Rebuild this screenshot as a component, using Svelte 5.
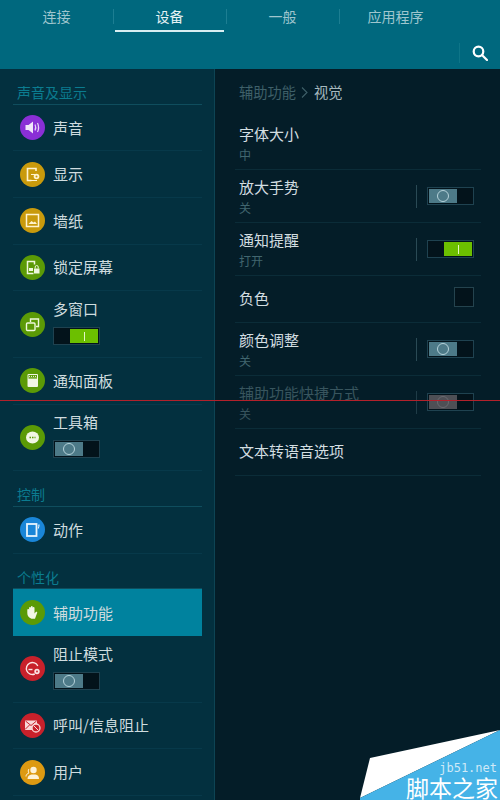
<script>
	const tabs = ['连接', '设备', '一般', '应用程序'];

	const menu = [
		{ section: '声音及显示', items: [
			{ id: 'sound', label: '声音', color: '#8a2fd6' },
			{ id: 'display', label: '显示', color: '#c99a0c' },
			{ id: 'wallpaper', label: '墙纸', color: '#c99a0c' },
			{ id: 'lock', label: '锁定屏幕', color: '#5b9a06' },
			{ id: 'multi', label: '多窗口', color: '#5b9a06', toggle: true },
			{ id: 'panel', label: '通知面板', color: '#5b9a06' },
			{ id: 'tools', label: '工具箱', color: '#5b9a06', toggle: false }
		] },
		{ section: '控制', items: [
			{ id: 'motion', label: '动作', color: '#1a86d8' }
		] },
		{ section: '个性化', items: [
			{ id: 'access', label: '辅助功能', color: '#5b9a06', active: true },
			{ id: 'block', label: '阻止模式', color: '#c8212b', toggle: false },
			{ id: 'callblock', label: '呼叫/信息阻止', color: '#c8212b' },
			{ id: 'user', label: '用户', color: '#dd9a12' }
		] }
	];

	const settings = [
		{ title: '字体大小', sub: '中' },
		{ title: '放大手势', sub: '关', toggle: false },
		{ title: '通知提醒', sub: '打开', toggle: true },
		{ title: '负色', check: true },
		{ title: '颜色调整', sub: '关', toggle: false },
		{ title: '辅助功能快捷方式', sub: '关', toggle: false, disabled: true },
		{ title: '文本转语音选项' }
	];
</script>

{#snippet sw(on)}
	<span class="switch" class:on>
		{#if on}
			<span class="off-part"></span>
			<span class="knob green"><i></i></span>
		{:else}
			<span class="knob grey"><b></b></span>
			<span class="off-part"></span>
		{/if}
	</span>
{/snippet}

{#snippet icon(id)}
	<svg viewBox="0 0 25 25" width="25" height="25" fill="none">
		{#if id === 'sound'}
			<path d="M5.500 10h3l4.500-3.500v12L8.500 15h-3z" fill="#f0e6fa" />
			<path d="M15 9.500q1.500 3 0 6M17.500 8q2.200 4.500 0 9" stroke="#e5d5f5" stroke-width="1.200" />
		{:else if id === 'display'}
			<path d="M16 9V6.500H7.500v12h4" stroke="#fff3cf" stroke-width="1.600" />
			<path d="M11 12.500h4M11 18.500h6" stroke="#fff3cf" stroke-width="1.200" />
			<circle cx="16.500" cy="14.500" r="2.800" fill="#fff3cf" />
			<circle cx="16.500" cy="14.500" r="1" fill="#c99a0c" />
		{:else if id === 'wallpaper'}
			<rect x="6.500" y="6.500" width="12" height="12" stroke="#fff3cf" stroke-width="1.500" />
			<path d="M8.500 16l3-3 2 1.500 1.500-1 2 2.500z" fill="#fff3cf" />
		{:else if id === 'lock'}
			<path d="M14.500 9.500v-3h-7v12h6" stroke="#eef8dc" stroke-width="1.500" />
			<rect x="9" y="13" width="4" height="3" fill="#eef8dc" />
			<rect x="14" y="13.500" width="5.500" height="5" fill="#eef8dc" />
			<path d="M15.200 13.500v-1.500a1.500 1.500 0 0 1 3 0v1.500" stroke="#eef8dc" />
		{:else if id === 'multi'}
			<rect x="6.500" y="11" width="8.500" height="7.500" rx="1" stroke="#eef8dc" stroke-width="1.400" />
			<path d="M10.500 10V7h8v7.500h-2.500" stroke="#eef8dc" stroke-width="1.400" />
		{:else if id === 'panel'}
			<rect x="7.500" y="6" width="10.500" height="13" rx="1" fill="#f2f6e4" />
			<rect x="8.500" y="7" width="8.500" height="2.800" fill="#5b9a06" />
			<path d="M9 8.400h7.500" stroke="#f2f6e4" stroke-dasharray="1 1" />
			<path d="M8.500 10.500h8.500" stroke="#5b9a06" stroke-width=".6" />
		{:else if id === 'tools'}
			<ellipse cx="12.500" cy="12.500" rx="6.500" ry="6" fill="#f2f6e4" />
			<path d="M9.500 12.500h6" stroke="#5b9a06" stroke-width="1.500" stroke-dasharray="1.500 1" />
		{:else if id === 'motion'}
			<rect x="7" y="7" width="9.500" height="12" stroke="#e8f4fd" stroke-width="1.800" />
			<path d="M18.800 7.500q.6 2-.6 4" stroke="#e8f4fd" stroke-width="1.200" />
		{:else if id === 'access'}
			<path d="M7.300 9.800a.9.900 0 0 1 1.800 0V8a.9.900 0 0 1 1.800 0V7a.9.900 0 0 1 1.800 0v1a.9.900 0 0 1 1.800 0v5.500l1.300-1.500c.8-.7 1.800.1 1.300.9L15 18.800h-3.500c-2.800-1-4.200-3-4.200-5.800z" fill="#f3f6e6" />
		{:else if id === 'block'}
			<path d="M17.800 10a6 6 0 1 0-3 8" stroke="#fbe4e4" stroke-width="1.400" />
			<path d="M8.500 13.500h4" stroke="#fbe4e4" stroke-width="1.400" />
			<circle cx="17" cy="15.500" r="2.700" fill="#fbe4e4" />
			<circle cx="17" cy="15.500" r=".9" fill="#c8212b" />
		{:else if id === 'callblock'}
			<rect x="5" y="7.500" width="12" height="9.500" fill="#f8d8d8" />
			<path d="M5.500 8l5.500 4.500L16.500 8M5 16.500l4.500-4.500" stroke="#c8212b" />
			<circle cx="16" cy="15" r="4" fill="#c8212b" stroke="#f8d8d8" stroke-width="1.300" />
			<path d="M13.500 12.500l5 5" stroke="#f8d8d8" />
		{:else if id === 'user'}
			<circle cx="13.500" cy="10" r="3.200" fill="#fdf2d8" />
			<path d="M7.500 19c0-3 2-4 4-4.500h4c2 .5 3.500 1.500 3.500 4.500z" fill="#fdf2d8" />
			<path d="M6 16.500c0-2 1.500-3 3-3.500-1-1-1-3 0-4" stroke="#fdf2d8" />
		{/if}
	</svg>
{/snippet}

<div class="screen">
	<header>
		<nav>
			{#each tabs as t, i}
				<div class="tab" class:current={i === 1}>{t}</div>
			{/each}
		</nav>
		<div class="tools">
			<span class="search">
				<svg viewBox="0 0 16 16" width="16" height="16" fill="none" stroke="#fff" stroke-width="2.200">
					<circle cx="6.500" cy="6.500" r="4.800" />
					<path d="M10 10l5 5" stroke-linecap="round" />
				</svg>
			</span>
		</div>
	</header>

	<div class="body">
		<aside>
			{#each menu as group}
				<div class="section"><span>{group.section}</span></div>
				{#each group.items as item}
					<div class="item" class:tall={item.toggle !== undefined} class:active={item.active}>
						<span class="badge" style="background: {item.color}">{@render icon(item.id)}</span>
						<div class="item-text">
							<span class="label">{item.label}</span>
							{#if item.toggle !== undefined}{@render sw(item.toggle)}{/if}
						</div>
					</div>
				{/each}
			{/each}
		</aside>

		<main>
			<div class="crumb">
				<span>辅助功能</span>
				<svg viewBox="0 0 18 20" width="18" height="20" fill="none" stroke="#3f6069" stroke-width="1.100">
					<path d="M6 5.500l5 5-5 5" />
				</svg>
				<strong>视觉</strong>
			</div>
			{#each settings as s}
				<div class="row" class:disabled={s.disabled} class:single={!s.sub}>
					<div class="row-text">
						<div class="title">{s.title}</div>
						{#if s.sub}<div class="sub">{s.sub}</div>{/if}
					</div>
					{#if s.toggle !== undefined}
						<span class="vline"></span>
						{@render sw(s.toggle)}
					{/if}
					{#if s.check}<span class="check"></span>{/if}
				</div>
			{/each}
		</main>
	</div>

	<div class="redline"></div>

	<div class="mark">
		<svg viewBox="0 0 140 70" width="140" height="70">
			<polygon points="10,28 140,0 0,68" fill="#fff" />
			<polygon points="140,0 140,70 0,70 0,68" fill="#45b3e7" />
		</svg>
		<span class="mark-url">jb51.net</span>
		<span class="mark-name">脚本之家</span>
	</div>
</div>

<style>
	:global(body) {
		background: #041d28;
	}
	.screen {
		position: relative;
		width: 500px;
		height: 800px;
		overflow: hidden;
		display: flex;
		flex-direction: column;
		font-family: "Noto Sans CJK SC", "Noto Sans", sans-serif;
		color: #d5e0e3;
	}
	header {
		height: 69px;
		flex: none;
		background: #00687e;
		box-sizing: border-box;
	}
	nav {
		display: flex;
		width: 452px;
		height: 33px;
	}
	.tab {
		position: relative;
		width: 113px;
		text-align: center;
		font-size: 14px;
		line-height: 33px;
		color: #9fc6ce;
	}
	.tab + .tab::before {
		content: '';
		position: absolute;
		left: 0;
		top: 9px;
		height: 15px;
		border-left: 1px solid #1d7e92;
	}
	.tab.current {
		color: #e6f3f5;
	}
	.tab.current::after {
		content: '';
		position: absolute;
		left: 2px;
		right: 2px;
		top: 30px;
		height: 2px;
		background: #d9eef2;
	}
	.tools {
		display: flex;
		justify-content: flex-end;
		padding-top: 10px;
	}
	.search {
		width: 41px;
		height: 20px;
		box-sizing: border-box;
		border-left: 1px solid #0e7588;
		display: flex;
		align-items: center;
		justify-content: center;
	}
	.body {
		flex: 1;
		display: flex;
		min-height: 0;
	}
	aside {
		width: 215px;
		flex: none;
		box-sizing: border-box;
		padding: 0 12px 0 13px;
		background: #03303f;
		border-right: 1px solid #0d4454;
		overflow: hidden;
	}
	.section {
		height: 35.7px;
		box-sizing: border-box;
		border-bottom: 1px solid #0f4d5d;
		padding: 14px 0 0 4px;
		font-size: 14px;
		line-height: 19px;
		color: #0b7c90;
	}
	.section span {
		display: block;
	}
	.item {
		height: 46.67px;
		box-sizing: border-box;
		display: flex;
		align-items: center;
		gap: 8px;
		padding-left: 7px;
		border-bottom: 1px solid #07394a;
	}
	.item.tall {
		height: 66.67px;
	}
	.item.active {
		background: #00829e;
		border-bottom: 0;
	}
	.badge {
		width: 25px;
		height: 25px;
		border-radius: 50%;
		flex: none;
	}
	.badge svg {
		display: block;
	}
	.item-text {
		display: flex;
		flex-direction: column;
		align-items: flex-start;
		gap: 9px;
	}
	.item.tall .item-text {
		padding-bottom: 3px;
	}
	.label {
		font-size: 15px;
		line-height: 18px;
		color: #cfdcdf;
	}
	.switch {
		display: flex;
		width: 47px;
		height: 18px;
		box-sizing: border-box;
		padding: 1px;
		border: 1px solid #1f4250;
		background: #03131b;
	}
	.off-part {
		flex: 1;
	}
	.knob {
		width: 28px;
		display: flex;
		align-items: center;
		justify-content: center;
	}
	.knob.grey {
		background: #4d7a88;
	}
	.knob.grey b {
		width: 10px;
		height: 10px;
		border-radius: 50%;
		border: 1px solid #b5d2da;
	}
	.knob.green {
		background: #6cbf00;
	}
	.knob.green i {
		width: 1px;
		height: 9px;
		background: #e4f7c4;
	}
	main {
		flex: 1;
		box-sizing: border-box;
		padding: 0 19px 0 20px;
		background: #041d28;
	}
	.crumb {
		height: 48px;
		box-sizing: border-box;
		padding: 13px 0 0 4px;
		display: flex;
		align-items: flex-start;
		font-size: 14.25px;
		line-height: 20px;
		color: #3f6069;
	}
	.crumb strong {
		font-weight: 400;
		color: #a6b9be;
	}
	.row {
		height: 53px;
		box-sizing: border-box;
		display: flex;
		align-items: center;
		padding: 0 7px 0 4px;
		border-bottom: 1px solid #0b2c38;
	}
	.row.single {
		height: 47px;
		padding-bottom: 4px;
	}
	.row-text {
		flex: 1;
		padding-top: 1px;
	}
	.title {
		font-size: 15px;
		line-height: 20px;
		color: #d3dee1;
	}
	.sub {
		font-size: 12px;
		line-height: 18px;
		margin-top: 2px;
		color: #41666f;
	}
	.vline {
		width: 1px;
		height: 23px;
		background: #2a4a55;
		margin-right: 10px;
	}
	.check {
		width: 20px;
		height: 20px;
		box-sizing: border-box;
		background: #03131b;
		border: 1px solid #24434e;
	}
	.row.disabled .title,
	.row.disabled .sub {
		color: #38555e;
	}
	.row.disabled .knob.grey {
		background: #4e4f55;
	}
	.row.disabled .knob.grey b {
		border-color: #6a6a70;
	}
	.row.disabled .vline {
		background: #1f3c47;
	}
	.redline {
		position: absolute;
		left: 0;
		right: 0;
		top: 400px;
		height: 1px;
		background: #b3212b;
	}
	.mark {
		position: absolute;
		right: 0;
		bottom: 0;
		width: 140px;
		height: 70px;
	}
	.mark svg {
		display: block;
	}
	.mark-url {
		position: absolute;
		right: 3px;
		top: 32px;
		font-family: "DejaVu Sans Mono", monospace;
		font-size: 12px;
		line-height: 12px;
		color: #cfe9f7;
	}
	.mark-name {
		position: absolute;
		right: 2px;
		top: 45px;
		font-size: 23px;
		line-height: 24px;
		color: #fff;
	}
</style>
